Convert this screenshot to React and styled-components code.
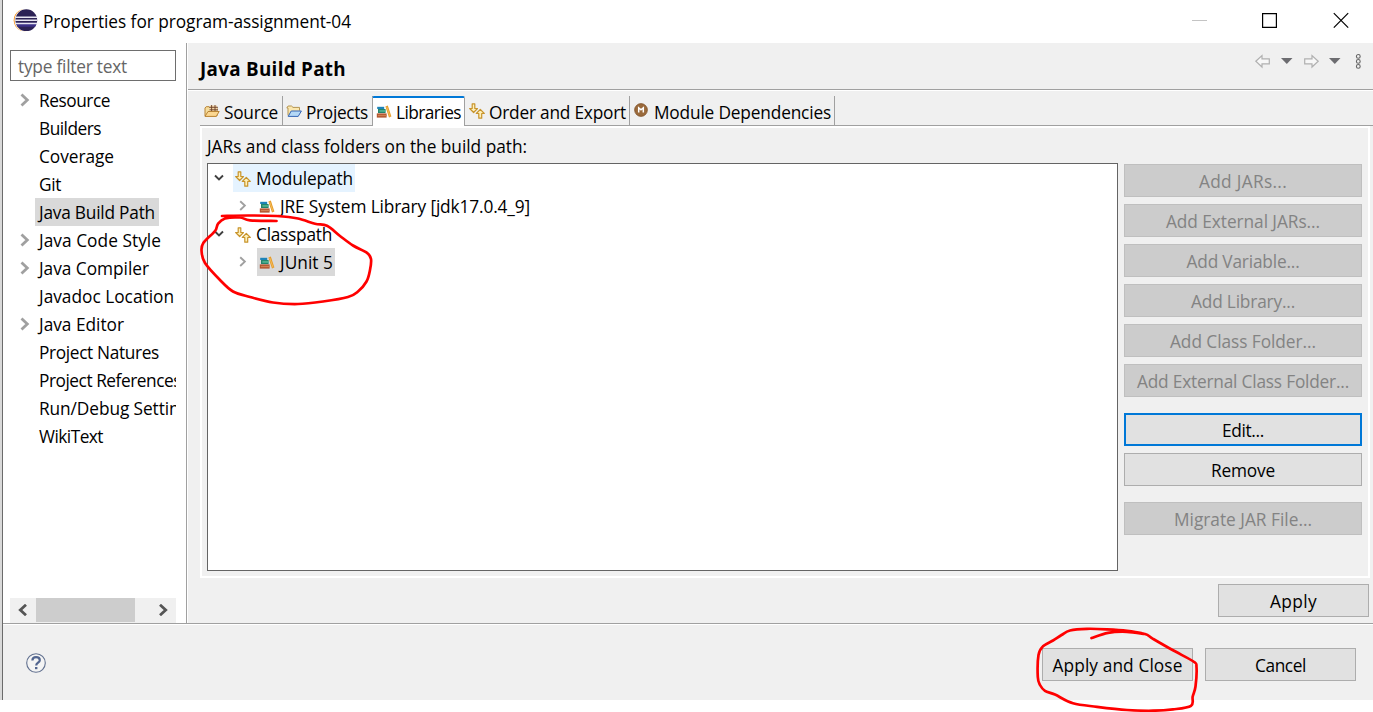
import React, { useLayoutEffect, useRef, useState } from "react";
import styled, { createGlobalStyle } from "styled-components";

const Global = createGlobalStyle`
  * { box-sizing: border-box; }
  html, body { margin: 0; height: 100%; background: #fff; overflow: hidden; }
  body { font-family: "Open Sans", "Noto Sans", sans-serif; font-size: 17.3px; color: #000; }
`;

const Screen = styled.div`
  position: relative;
  width: 1373px;
  height: 712px;
  background: #fff;
`;
const Window = styled.div`
  display: flex;
  flex-direction: column;
  height: 700px;
  margin-left: 2px;
  border-left: 1px solid #6b6b6b;
  box-shadow: -2px 0 0 #d9d9d9;
`;
const TitleBar = styled.header`
  display: flex;
  align-items: center;
  height: 43px;
  padding-left: 10px;
  background: #fff;
`;
const Title = styled.div`
  flex: 1;
  padding-left: 5px;
`;
const Logo = styled.svg`
  margin-bottom: 3px;
`;
const WindowButtons = styled.div`
  display: flex;
  gap: 55px;
  padding: 0 24px 3px 0;
`;
const Body = styled.div`
  display: flex;
  height: 580px;
`;
const Sidebar = styled.nav`
  display: flex;
  flex-direction: column;
  width: 184px;
  padding: 7px 10px 0 7px;
  border-right: 1px solid #a0a0a0;
  background: #fff;
`;
const Filter = styled.div`
  display: flex;
  align-items: center;
  height: 31px;
  padding: 2px 0 0 7px;
  border: 1px solid #6e6e6e;
  color: #666;
`;
const NavList = styled.div`
  flex: 1;
  padding-top: 5px;
  overflow: hidden;
`;
const NavRow = styled.div`
  display: flex;
  align-items: center;
  height: 28px;
`;
const Twisty = styled.span`
  display: flex;
  flex: none;
  justify-content: center;
  width: ${(p) => p.$w}px;
  padding: 0 ${(p) => p.$right || 0}px 0 ${(p) => p.$left || 0}px;
`;
const NavLabel = styled.span`
  flex: none;
  height: 28px;
  padding: 2px 4px 0;
  line-height: 26px;
  background: ${(p) => (p.$selected ? "#d9d9d9" : "transparent")};
`;
const ScrollBar = styled.div`
  display: flex;
  align-items: center;
  height: 25px;
  padding-bottom: 1px;
  background: #f0f0f0;
`;
const ScrollArrow = styled.span`
  display: flex;
  align-items: center;
  justify-content: center;
  width: 26px;
  height: 24px;
`;
const Thumb = styled.span`
  width: 99px;
  height: 24px;
  margin-right: 15px;
  background: #cdcdcd;
`;
const Page = styled.main`
  display: flex;
  flex: 1;
  flex-direction: column;
  border-left: 1px solid #fff;
  background: #f0f0f0;
`;
const PageHeader = styled.div`
  display: flex;
  justify-content: space-between;
  height: 47px;
  padding: 0 11px 0 12px;
  border-bottom: 1px solid #a0a0a0;
  box-shadow: 0 1px 0 #fff;
`;
const Heading = styled.h1`
  margin: 0;
  padding-top: 2px;
  font-family: "Open Sans", "Noto Sans", sans-serif;
  font-size: 18.8px;
  font-weight: 700;
  line-height: 48px;
`;
const Tabs = styled.div`
  display: flex;
  height: 36px;
  margin-left: 12px;
  padding-top: 6px;
  border-bottom: 1px solid #a0a0a0;
`;
const Tab = styled.div`
  display: flex;
  align-items: center;
  width: ${(p) => p.$w}px;
  height: 29px;
  padding: 4px 0 0 ${(p) => p.$pad}px;
  gap: ${(p) => p.$gap || 4}px;
  border-right: 1px solid #a0a0a0;
  ${(p) =>
    p.$active &&
    `
    height: 30px;
    margin-left: -1px;
    padding-top: 1px;
    border-left: 1px solid #a0a0a0;
    border-top: 2px solid #0078d7;
    border-radius: 2px 2px 0 0;
    background: #fff;
  `}
`;
const TabIcon = styled.span`
  display: flex;
  flex: none;
  margin-bottom: ${(p) => p.$up || 3}px;
`;
const Group = styled.section`
  height: 452px;
  margin: 0 3px 0 12px;
  padding: 5px 6px 0 5px;
  border: 2px solid #fff;
`;
const Caption = styled.div`
  height: 30px;
  line-height: 28px;
`;
const Columns = styled.div`
  display: flex;
  gap: 6px;
`;
const Tree = styled.div`
  width: 911px;
  height: 408px;
  border: 1px solid #646464;
  background: #fff;
`;
const TreeRow = styled.div`
  display: flex;
  align-items: center;
  height: 28px;
  padding-left: ${(p) => p.$indent}px;
`;
const TreeLabel = styled.span`
  display: flex;
  align-items: center;
  height: 28px;
  padding: 2px 2px 0;
  gap: 5px;
  line-height: 26px;
  background: ${(p) => p.$bg || "transparent"};
`;
const Buttons = styled.div`
  display: flex;
  flex-direction: column;
  width: 238px;
  padding-top: 1px;
  gap: 7px;
`;
const Button = styled.div`
  display: flex;
  flex: none;
  align-items: center;
  justify-content: center;
  width: ${(p) => p.$w || 238}px;
  height: 33px;
  margin-top: ${(p) => p.$mt || 0}px;
  padding-top: 2px;
  border: 1px solid ${(p) => (p.$off ? "#bfbfbf" : "#adadad")};
  background: ${(p) => (p.$off ? "#ccc" : "#e1e1e1")};
  color: ${(p) => (p.$off ? "#838383" : "#000")};
  ${(p) => p.$focus && "border: 2px solid #0078d7;"}
`;
const ApplyRow = styled.div`
  display: flex;
  justify-content: flex-end;
  padding: 6px 4px 0 0;
`;
const Footer = styled.footer`
  display: flex;
  align-items: center;
  flex: 1;
  gap: 12px;
  padding: 4px 17px 0 22px;
  border-top: 1px solid #a0a0a0;
  box-shadow: inset 0 1px 0 #fff;
  background: #f0f0f0;
`;
const Help = styled.div`
  flex: 1;
  height: 24px;
`;
const Toolbar = styled.div`
  display: flex;
  align-items: flex-start;
  padding-top: 10px;
`;
const Ink = styled.svg`
  position: absolute;
  left: 0;
  top: 0;
  pointer-events: none;
`;
const Run = styled.span`
  display: inline-block;
  white-space: pre;
`;

/* Text tracked so that it occupies the given advance width. */
function T({ w, children }) {
  const ref = useRef(null);
  const [ls, setLs] = useState(0);
  useLayoutEffect(() => {
    const natural = ref.current.getBoundingClientRect().width;
    setLs((w - natural) / children.length);
  }, [w, children]);
  return (
    <Run ref={ref} style={{ letterSpacing: ls + "px" }}>
      {children}
    </Run>
  );
}

const EclipseLogo = () => (
  <Logo width="25" height="25" viewBox="0 0 25 25">
    <circle cx="11.7" cy="12.2" r="11" fill="#f7941e" />
    <circle cx="13" cy="12.2" r="11.4" fill="#fff" />
    <circle cx="13.3" cy="12.2" r="10.9" fill="#2c2255" />
    <path d="M3 14.8h20.6a10.8 10.8 0 0 1-1.6 4H4.7a10.8 10.8 0 0 1-1.7-4z" fill="#3d3188" />
    <path d="M2.4 9.2h21.9M2.2 12.3h22.3M2.4 15.4h21.9" stroke="#e8e6f2" strokeWidth="1.5" />
  </Logo>
);

const Chevron = ({ size = 1, color = "#a0a0a0", sw = 2.8 }) => (
  <svg width={10 * size} height={14 * size} viewBox="0 0 10 14">
    <path d="M1.5 1.5L7.3 7l-5.8 5.5" fill="none" stroke={color} strokeWidth={sw} />
  </svg>
);
const ChevronDown = () => (
  <svg width="10" height="8" viewBox="0 0 10 8">
    <path d="M1 1.5l4 4 4-4" fill="none" stroke="#404040" strokeWidth="1.9" />
  </svg>
);
const ScrollChevron = ({ left }) => (
  <svg width="10" height="12" viewBox="0 0 10 12">
    <path d={left ? "M8 .8L2.3 6 8 11.2" : "M2 .8L7.7 6 2 11.2"} fill="none" stroke="#555" strokeWidth="2.8" />
  </svg>
);

const Books = () => (
  <svg width="16" height="14" viewBox="0 0 16 14">
    <path d="M1.2 1.8h7V4h-7z" fill="#1d83b8" />
    <path d="M2 4h7.6v4H2z" fill="#23846c" />
    <path d="M3.4 5.2h6.2v1.5H3.4z" fill="#58b996" />
    <path d="M.8 8.4h9.8v4.2H.8z" fill="#b0532c" />
    <path d="M1.8 9.8h8.8v1.4H1.8z" fill="#cf8152" />
    <path d="M9.4 1.4l2.4-.8 3.6 11-2.4.8z" fill="#e69a26" />
    <path d="M10.7 1.8l3.4 9.8" stroke="#f8cb72" strokeWidth=".7" />
  </svg>
);
const Order = () => (
  <svg width="16" height="16" viewBox="0 0 16 16" strokeLinejoin="round">
    <path d="M3.2.8h2.6v4.7h2.7L4.6 9.5.7 5.5h2.5z" fill="#fff0b8" stroke="#c8942c" strokeWidth="1.2" />
    <path d="M9.8 15.2h2.9v-4.7h2.6l-4-4.1-4 4.1h2.500z" fill="#fff0b8" stroke="#c8942c" strokeWidth="1.2" />
  </svg>
);
const SourceFolder = () => (
  <svg width="16" height="14" viewBox="0 0 16 14">
    <path d="M1 12V4l1.2-1.3h3L6.2 4H13v8z" fill="#f5dc9c" stroke="#b98435" />
    <path d="M6 1.5h7v5H6z" fill="#f2d5a6" />
    <path d="M5.5 3.3H14M5.500 5.800H14M7.600 1v6.500M11 1v6.500" stroke="#6b3f28" strokeWidth=".9" />
    <path d="M1 12.4l3-4.900h11.200l-3 4.900z" fill="#fbd791" stroke="#b98435" />
  </svg>
);
const ProjectFolder = () => (
  <svg width="16" height="14" viewBox="0 0 16 14">
    <path d="M2 11.5V4H.8l1.300-2h3.400L7 3.400h6.500v3.200" fill="#fbe7ae" stroke="#b59552" />
    <path d="M2.200 12.400L5.200 7h10.200l-3.200 5.400z" fill="#b4d8f6" stroke="#3565b5" />
  </svg>
);
const ModuleIcon = () => (
  <svg width="14" height="14" viewBox="0 0 14 14">
    <circle cx="7" cy="7" r="6.4" fill="#9a6a3c" stroke="#7b4a20" strokeWidth=".7" />
    <path d="M4.7 9.4V4.800L7 6.800l2.300-2v4.600" fill="none" stroke="#fff" strokeWidth="1.5" />
  </svg>
);

const NAV = [
  ["Resource", 71, true],
  ["Builders", 62],
  ["Coverage", 75],
  ["Git", 22],
  ["Java Build Path", 116, false, true],
  ["Java Code Style", 122, true],
  ["Java Compiler", 110, true],
  ["Javadoc Location", 135],
  ["Java Editor", 85, true],
  ["Project Natures", 120],
  ["Project References", 142],
  ["Run/Debug Settings", 158],
  ["WikiText", 64],
];

const ACTIONS = [
  ["Add JARs...", 88, { $off: true }],
  ["Add External JARs...", 154, { $off: true }],
  ["Add Variable...", 113, { $off: true }],
  ["Add Library...", 104, { $off: true }],
  ["Add Class Folder...", 146, { $off: true }],
  ["Add External Class Folder...", 212, { $off: true }],
  ["Edit...", 42, { $focus: true, $mt: 9 }],
  ["Remove", 64, {}],
  ["Migrate JAR File...", 138, { $off: true, $mt: 9 }],
];

/* Catmull-Rom spline through a list of points. */
const spline = (pts) => {
  let d = `M${pts[0]}`;
  for (let i = 0; i < pts.length - 1; i++) {
    const a = pts[i - 1] || pts[i];
    const b = pts[i];
    const c = pts[i + 1];
    const e = pts[i + 2] || c;
    d += `C${b[0] + (c[0] - a[0]) / 6} ${b[1] + (c[1] - a[1]) / 6} ${c[0] - (e[0] - b[0]) / 6} ${c[1] - (e[1] - b[1]) / 6} ${c[0]} ${c[1]}`;
  }
  return d;
};
const LOOP_A = [
  [222, 216], [248, 215.5], [277, 216], [298, 218.5], [315, 223.8], [327, 225.8], [340, 236], [353, 245.5],
  [367, 252.8], [371, 259], [370, 270], [366.5, 281.5], [358, 291.5], [348, 297], [323, 301.5], [298, 304],
  [273, 302.5], [250, 297], [233, 291.5], [220, 280], [205, 263], [201.6, 251.5], [203.3, 243], [215, 231],
  [218, 223.8], [225, 218.5], [240, 217.5], [250, 220.3], [276.5, 221],
];
const LOOP_B = [
  [1091.5, 638], [1108, 632.8], [1127, 631.8], [1145, 634], [1127, 630.8], [1107, 629.3], [1087, 628.8],
  [1070, 630.5], [1061.5, 635], [1053, 640.5], [1043, 646.3], [1038.5, 655], [1037.8, 677], [1040, 685],
  [1045, 690.8], [1055, 694.6], [1073, 703.3], [1097, 706.8], [1127, 710], [1153, 710.7], [1173, 709.4],
  [1191, 705.8], [1192.7, 696.5], [1195.5, 686.5], [1196.5, 667], [1193.5, 661.5], [1173, 650.3],
  [1153, 638.8], [1145, 634], [1127, 631],
];

export default function App() {
  return (
    <Screen>
      <Global />
      <Window>
        <TitleBar>
          <EclipseLogo />
          <Title><T w={308}>Properties for program-assignment-04</T></Title>
          <WindowButtons>
            <svg width="15" height="16"><path d="M0 8.5h15" stroke="#c4c4c4" /></svg>
            <svg width="16" height="16"><path d="M.6 1.6h13.800v13.800H.6z" fill="none" stroke="#000" strokeWidth="1.2" /></svg>
            <svg width="16" height="16"><path d="M.8 1.2l14.400 14.400M15.200 1.200L.8 15.600" stroke="#000" strokeWidth="1.2" /></svg>
          </WindowButtons>
        </TitleBar>
        <Body>
          <Sidebar>
            <Filter><T w={109}>type filter text</T></Filter>
            <NavList>
              {NAV.map(([label, w, open, selected]) => (
                <NavRow key={label}>
                  <Twisty $w={25} $left={4}>{open && <Chevron />}</Twisty>
                  <NavLabel $selected={selected}><T w={w}>{label}</T></NavLabel>
                </NavRow>
              ))}
            </NavList>
            <ScrollBar>
              <ScrollArrow><ScrollChevron left /></ScrollArrow>
              <Thumb />
              <ScrollArrow><ScrollChevron /></ScrollArrow>
            </ScrollBar>
          </Sidebar>
          <Page>
            <PageHeader>
              <Heading><T w={146}>Java Build Path</T></Heading>
              <Toolbar>
                <svg width="107" height="17" viewBox="0 0 107 17">
                  <path d="M.8 8.2L7 2.500v3.300h7.300v5H7V14z" fill="#f7f7f7" stroke="#b0b0b0" strokeWidth="1.2" />
                  <path d="M26 5h11.500l-5.700 6z" fill="#6c6c70" />
                  <path d="M63.200 8.200L57 2.500v3.300h-7.300v5H57V14z" fill="#f7f7f7" stroke="#b0b0b0" strokeWidth="1.2" />
                  <path d="M74 5h11.500l-5.700 6z" fill="#6c6c70" />
                  <g fill="none" stroke="#666" strokeWidth="1.1">
                    <circle cx="103.3" cy="3.4" r="1.9" />
                    <circle cx="103.3" cy="8.4" r="1.9" />
                    <circle cx="103.3" cy="13.4" r="1.9" />
                  </g>
                </svg>
              </Toolbar>
            </PageHeader>
            <Tabs>
              <Tab $w={83} $pad={4}><TabIcon><SourceFolder /></TabIcon><T w={54}>Source</T></Tab>
              <Tab $w={90} $pad={3}><TabIcon><ProjectFolder /></TabIcon><T w={62}>Projects</T></Tab>
              <Tab $w={93} $pad={3} $active><TabIcon $up={1}><Books /></TabIcon><T w={65}>Libraries</T></Tab>
              <Tab $w={165} $pad={4}><TabIcon $up={4}><Order /></TabIcon><T w={137}>Order and Export</T></Tab>
              <Tab $w={205} $pad={4} $gap={6}><TabIcon $up={6}><ModuleIcon /></TabIcon><T w={177}>Module Dependencies</T></Tab>
            </Tabs>
            <Group>
              <Caption><T w={320}>JARs and class folders on the build path:</T></Caption>
              <Columns>
                <Tree>
                  <TreeRow $indent={0}>
                    <Twisty $w={25} $right={4}><ChevronDown /></Twisty>
                    <TreeLabel $bg="#e5f3ff"><Order /><T w={97}>Modulepath</T></TreeLabel>
                  </TreeRow>
                  <TreeRow $indent={25}>
                    <Twisty $w={24} $right={4}><Chevron size={0.8} sw={2.4} /></Twisty>
                    <TreeLabel><Books /><T w={250}>JRE System Library [jdk17.0.4_9]</T></TreeLabel>
                  </TreeRow>
                  <TreeRow $indent={0}>
                    <Twisty $w={25} $right={4}><ChevronDown /></Twisty>
                    <TreeLabel><Order /><T w={76}>Classpath</T></TreeLabel>
                  </TreeRow>
                  <TreeRow $indent={25}>
                    <Twisty $w={24} $right={4}><Chevron size={0.8} sw={2.4} /></Twisty>
                    <TreeLabel $bg="#d9d9d9"><Books /><T w={53}>JUnit 5</T></TreeLabel>
                  </TreeRow>
                </Tree>
                <Buttons>
                  {ACTIONS.map(([label, w, look]) => (
                    <Button key={label} {...look}><T w={w}>{label}</T></Button>
                  ))}
                </Buttons>
              </Columns>
            </Group>
            <ApplyRow><Button $w={151}><T w={47}>Apply</T></Button></ApplyRow>
          </Page>
        </Body>
        <Footer>
          <Help>
            <svg width="22" height="22" viewBox="0 0 22 22">
              <circle cx="11" cy="11" r="9.3" fill="#f4f4f4" stroke="#61708f" strokeWidth="1.1" />
              <path d="M7.4 8.600C7.400 6.300 9 5.200 11 5.200s3.800 1 3.800 3c0 2.400-3.600 2.600-3.600 5.200" fill="none" stroke="#52658f" strokeWidth="2.2" />
              <path d="M10 15h2.400v2.200H10z" fill="#52658f" />
            </svg>
          </Help>
          <Button $w={151}><T w={130}>Apply and Close</T></Button>
          <Button $w={151}><T w={51}>Cancel</T></Button>
        </Footer>
      </Window>
      <Ink width="1373" height="712" fill="none" stroke="#f00" strokeWidth="2.7" strokeLinecap="round" strokeLinejoin="round">
        <path d={spline(LOOP_A)} />
        <path d={spline(LOOP_B)} />
      </Ink>
    </Screen>
  );
}
